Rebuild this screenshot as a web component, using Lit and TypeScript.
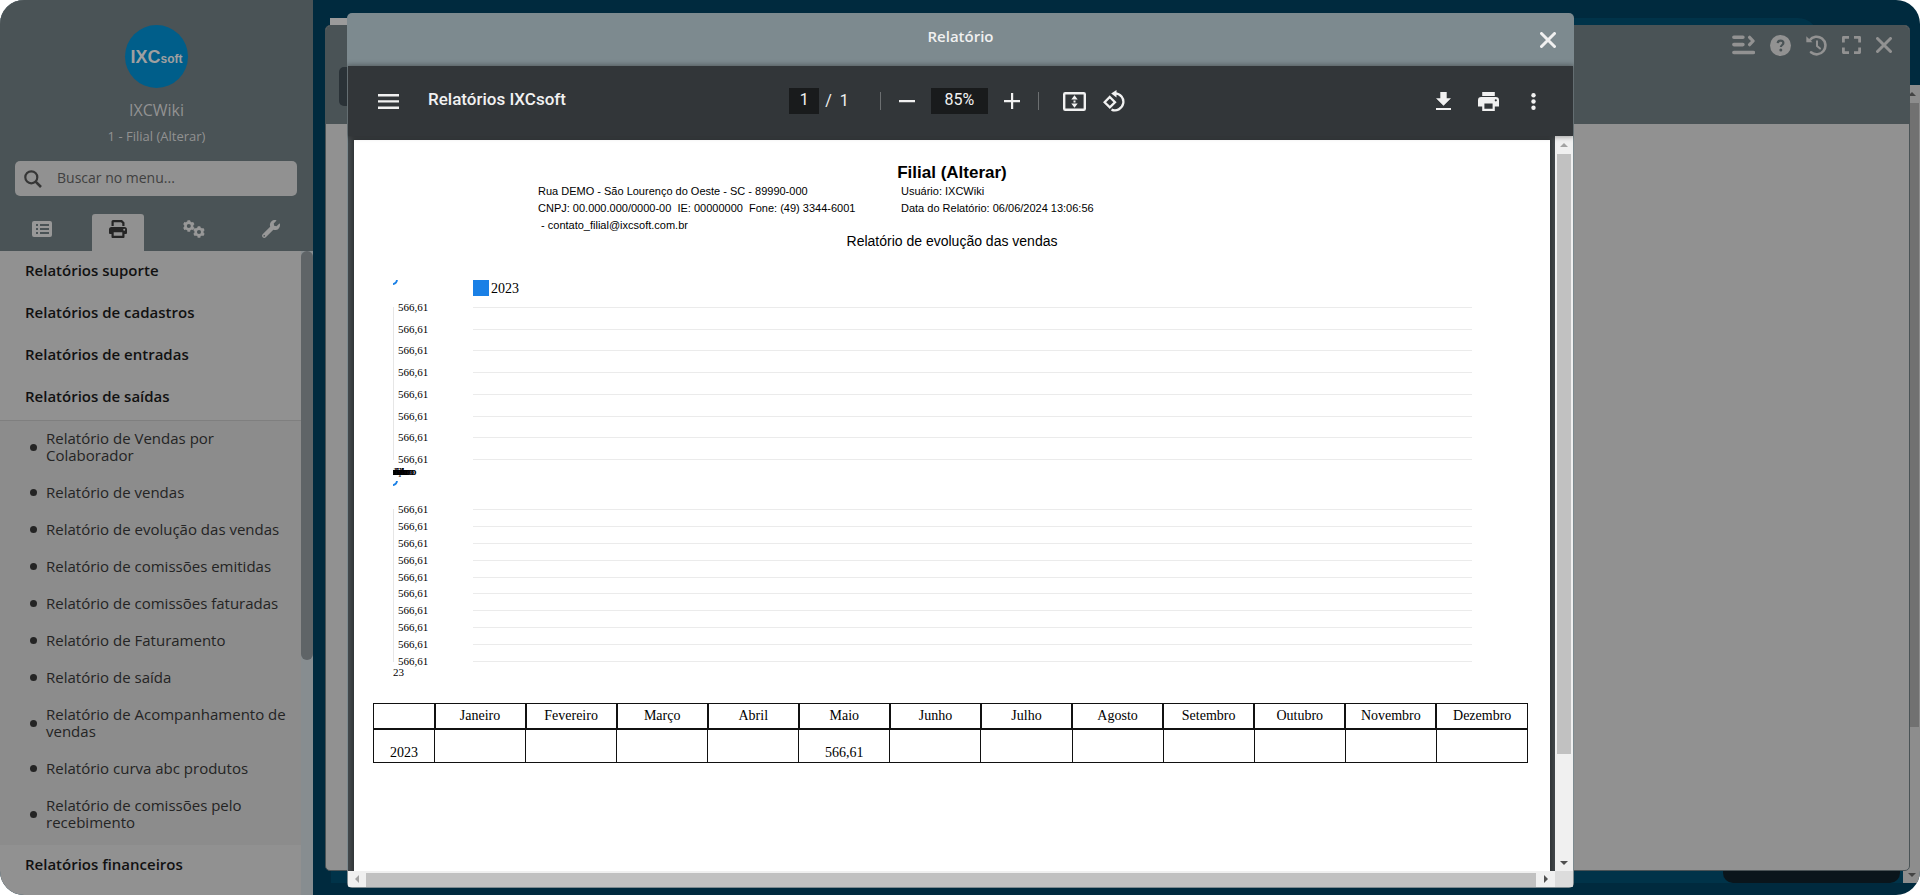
import { LitElement, html, css, svg } from "lit";
import { customElement, state } from "lit/decorators.js";

const MONTHS = ["Janeiro", "Fevereiro", "Março", "Abril", "Maio", "Junho", "Julho", "Agosto", "Setembro", "Outubro", "Novembro", "Dezembro"];
const SALES: Record<string, string> = { Maio: "566,61" };
const GROUPS = [
  { name: "Relatórios suporte", items: [] as string[] },
  { name: "Relatórios de cadastros", items: [] as string[] },
  { name: "Relatórios de entradas", items: [] as string[] },
  {
    name: "Relatórios de saídas",
    items: [
      "Relatório de Vendas por Colaborador",
      "Relatório de vendas",
      "Relatório de evolução das vendas",
      "Relatório de comissões emitidas",
      "Relatório de comissões faturadas",
      "Relatório de Faturamento",
      "Relatório de saída",
      "Relatório de Acompanhamento de vendas",
      "Relatório curva abc produtos",
      "Relatório de comissões pelo recebimento",
    ],
  },
  { name: "Relatórios financeiros", items: [] as string[] },
];

/* Six-toothed gear with a round hole, centred on cx, cy */
const gear = (cx: number, cy: number, r: number) => svg`
  <circle cx=${cx} cy=${cy} r=${r * 0.58} fill="none" stroke="currentColor" stroke-width=${r * 0.46}></circle>
  ${[0, 60, 120, 180, 240, 300].map(
    (a) => svg`<rect x=${cx - r * 0.24} y=${cy - r} width=${r * 0.48} height=${r * 0.4} rx="0.4" fill="currentColor" transform="rotate(${a} ${cx} ${cy})"></rect>`
  )}`;

const icons = {
  search: html`<svg width="18" height="18" viewBox="0 0 18 18" fill="none" stroke="currentColor"><circle cx="7.3" cy="7.3" r="6" stroke-width="2.2"></circle><path d="M11.6 11.6 17 17" stroke-width="2.6"></path></svg>`,
  list: html`<svg width="20" height="16" viewBox="0 0 20 16"><path fill="currentColor" fill-rule="evenodd" d="M2 0h16a2 2 0 0 1 2 2v12a2 2 0 0 1-2 2H2a2 2 0 0 1-2-2V2a2 2 0 0 1 2-2zM4 3v2h2V3zm4 0v2h9V3zM4 7v2h2V7zm4 0v2h9V7zm-4 4v2h2v-2zm4 0v2h9v-2z"></path></svg>`,
  printer: html`<svg width="18" height="18" viewBox="0 0 18 18"><path fill="currentColor" fill-rule="evenodd" d="M4 0h9l2.500 2.500V6h-2.200V3.400L12 2.200H4.700V6H2.500V1.500A1.500 1.500 0 0 1 4 0zM2.500 7h13A2.500 2.500 0 0 1 18 9.500V13a1 1 0 0 1-1 1h-1.500v3a1 1 0 0 1-1 1h-11a1 1 0 0 1-1-1v-3H1a1 1 0 0 1-1-1V9.500A2.500 2.500 0 0 1 2.500 7zM4.700 12.200v3.600h8.600v-3.600zM15.200 8.700a1 1 0 1 0 0 2 1 1 0 0 0 0-2z"></path></svg>`,
  gears: html`<svg width="22" height="18" viewBox="0 0 22 18">${gear(5.8, 6, 5.8)}${gear(16, 12, 5.8)}</svg>`,
  wrench: html`<svg width="18" height="18" viewBox="0 0 512 512"><path fill="currentColor" fill-rule="evenodd" d="M507.700 109.100c-2.200-9-13.500-12.100-20.100-5.500l-74.400 74.400-67.900-11.300L334 98.900l74.400-74.400c6.600-6.600 3.400-17.900-5.700-20.200-47.400-11.700-99.600.9-136.600 37.900-39.600 39.600-50.500 97.100-34.100 147.200L18.700 402.800c-25 25-25 65.500 0 90.500s65.500 25 90.500 0l213.200-213.200c50.100 16.700 107.500 5.700 147.400-34.200 37.100-37.100 49.700-89.300 37.900-136.800zM64 472a24 24 0 1 1 0-48 24 24 0 0 1 0 48z"></path></svg>`,
  close: html`<svg width="16" height="16" viewBox="0 0 16 16"><path d="M1.500 1.500l13 13M14.500 1.500l-13 13" stroke="currentColor" stroke-width="3" stroke-linecap="round"></path></svg>`,
  sideMenu: html`<svg width="23" height="20" viewBox="0 0 23 20" fill="none" stroke="currentColor" stroke-width="3.600" stroke-linecap="round" stroke-linejoin="round"><path d="M1.900 2.200h9M1.900 9.600h9M1.900 17.500h19.500"></path><path d="M17.600 2.300l3.500 3.700-3.500 3.700" stroke-width="3.200"></path></svg>`,
  help: html`<svg width="21" height="21" viewBox="0 0 21 21"><circle cx="10.500" cy="10.500" r="10.500" fill="currentColor"></circle><path class="hole" d="M7.700 8.200c.2-1.900 1.300-2.600 2.800-2.600 1.700 0 2.900 1 2.900 2.400 0 2-2.500 2-2.500 4" fill="none" stroke-width="2.200"></path><circle class="dot" cx="10.800" cy="15" r="1.500"></circle></svg>`,
  history: html`<svg width="21" height="21" viewBox="0 0 21 21" fill="none" stroke="currentColor" stroke-width="2.600" stroke-linecap="round"><path d="M3.600 5.200A8.800 8.800 0 1 1 5 17.300"></path><path d="M11 6.200v4.800l3 2.500" stroke-width="2"></path><path d="M.3 1.200v6.100h6.200z" fill="currentColor" stroke="none"></path></svg>`,
  expand: html`<svg width="19" height="18" viewBox="0 0 19 18" fill="none" stroke="currentColor" stroke-width="2.800" stroke-linejoin="round"><path d="M1.400 6.500V1.400H7M12 1.400h5.600v5.100M17.600 11.500v5.100H12M7 16.600H1.400v-5.100"></path></svg>`,
  burger: html`<svg width="21" height="15" viewBox="0 0 21 15"><path fill="currentColor" d="M0 0h21v2.400H0zM0 6.200h21v2.400H0zM0 12.600h21V15H0z"></path></svg>`,
  minus: html`<svg width="16" height="16" viewBox="0 0 16 16"><path fill="currentColor" d="M0 7h16v2.200H0z"></path></svg>`,
  plus: html`<svg width="16" height="16" viewBox="0 0 16 16"><path fill="currentColor" d="M0 7h7V0h2.200v7H16v2.200H9.200V16H7V9.200H0z"></path></svg>`,
  fit: html`<svg width="23" height="19" viewBox="0 0 23 19"><rect x="1.200" y="1.200" width="20.600" height="16.600" rx="1" fill="none" stroke="currentColor" stroke-width="2.400"></rect><path fill="currentColor" d="M11.500 3.200l3.200 4.200H8.300zM11.500 15.800l3.200-4.200H8.300zM10.500 8.600h2v1.800h-2z"></path></svg>`,
  rotate: html`<svg width="22" height="22" viewBox="0 0 22 22" fill="none" stroke="currentColor" stroke-width="2.300"><path d="M6.800 7 12 12.200 6.800 17.400 1.600 12.200z"></path><path d="M12 3.300a8.500 8.500 0 1 1-3.500 16.300"></path><path d="M13.500 0v7.400L8.200 3.500z" fill="currentColor" stroke="none"></path></svg>`,
  download: html`<svg width="15" height="18" viewBox="0 0 15 18"><path fill="currentColor" d="M4.300 0h6.400v6.300H15l-7.500 7.400L0 6.300h4.300zM0 15.900h15V18H0z"></path></svg>`,
  print: html`<svg width="21" height="19" viewBox="0 0 21 19"><path fill="currentColor" fill-rule="evenodd" d="M4.200 0h12.600v3.900H4.200zM3.200 5h14.600A3.200 3.200 0 0 1 21 8.200v6.400h-4.200V19H4.200v-4.400H0V8.200A3.200 3.200 0 0 1 3.200 5zM6.400 11.600v5.200h8.200v-5.200zM17.800 7.200a1.100 1.100 0 1 0 0 2.200 1.100 1.100 0 0 0 0-2.200z"></path></svg>`,
  more: html`<svg width="5" height="17" viewBox="0 0 5 17" fill="currentColor"><circle cx="2.500" cy="2.200" r="2.200"></circle><circle cx="2.500" cy="8.500" r="2.200"></circle><circle cx="2.500" cy="14.800" r="2.200"></circle></svg>`,
};

const arrow = (d: string) => html`<svg class="arrow" width="8" height="8" viewBox="0 0 8 8"><path fill="currentColor" d=${d}></path></svg>`;
const UP = "M0 6h8L4 2z";
const DOWN = "M0 2h8L4 6z";
const LEFT = "M6 0v8L2 4z";
const RIGHT = "M2 0v8l4-4z";

@customElement("side-menu")
class SideMenu extends LitElement {
  @state() private tab = 1;

  static styles = css`
    * { box-sizing: border-box; }
    :host { display: flex; flex-direction: column; background: #919191; font-family: "Open Sans", sans-serif; overflow: hidden; }
    button { border: 0; background: none; font: inherit; color: inherit; padding: 0; cursor: pointer; }
    svg { display: block; }
    .head { background: #4a5356; color: #929292; display: flex; flex-direction: column; align-items: center; padding-top: 25px; flex: none; }
    .logo { width: 63px; height: 63px; border-radius: 50%; background: #005e8a; color: #a0a0a0; display: flex; align-items: baseline; justify-content: center; font-family: "Liberation Sans", Arial, sans-serif; font-weight: 700; }
    .brand { font-size: 18px; line-height: 64px; }
    .brand-soft { font-size: 12px; }
    .user { font-size: 16px; line-height: 22px; margin-top: 11px; }
    .branch { font-size: 13px; line-height: 18px; margin-top: 6px; }
    .search { align-self: stretch; margin: 16px 16px 18px 15px; height: 35px; border-radius: 5px; background: #919191; color: #363636; display: flex; align-items: center; gap: 13px; padding-left: 9px; }
    .search input { flex: 1; min-width: 0; border: 0; outline: 0; background: none; font: 14px "Open Sans", sans-serif; color: #363636; padding: 0 2px 2px; }
    .search input::placeholder { color: #404040; opacity: 1; }
    .tabs { align-self: stretch; display: grid; grid-template-columns: 92px 52px 100px 1fr; height: 37px; color: #989898; }
    .tab { display: flex; align-items: center; justify-content: center; padding: 0 0 7px; }
    .tab:first-child { padding-right: 8px; }
    .tab:last-child { padding-right: 15px; }
    .tab.on { background: #919191; color: #252525; border-radius: 3px 3px 0 0; }
    .body { flex: 1; min-height: 0; display: flex; }
    .list { flex: 1; min-width: 0; overflow: hidden; }
    .group { display: block; width: 100%; height: 42px; padding: 0 0 4px 25px; text-align: left; font-size: 15px; font-weight: 600; color: #111; }
    .sub { margin: 1px 0 0; padding: 0 0 3px; list-style: none; background: #8c8c8c; border-top: 1px solid #7f7f7f; }
    .item { display: flex; align-items: center; gap: 9px; padding: 9px 6px 11px 30px; font-size: 15px; line-height: 17px; color: #242424; text-decoration: none; }
    .dot { width: 7px; height: 7px; border-radius: 50%; background: #242424; flex: none; }
    .bar { width: 12px; background: #878d90; flex: none; }
    .thumb { height: 409px; border-radius: 6px; background: #5f6467; }
  `;

  render() {
    const tabs = [["Menu", icons.list], ["Relatórios", icons.printer], ["Configurações", icons.gears], ["Ferramentas", icons.wrench]] as const;
    return html`
      <div class="head">
        <div class="logo"><span class="brand">IXC</span><span class="brand-soft">soft</span></div>
        <div class="user">IXCWiki</div>
        <div class="branch">1 - Filial (Alterar)</div>
        <label class="search">${icons.search}<input type="text" aria-label="Buscar no menu" placeholder="Buscar no menu..." /></label>
        <div class="tabs">
          ${tabs.map(([name, icon], i) => html`<button class="tab ${i === this.tab ? "on" : ""}" aria-label=${name} @click=${() => (this.tab = i)}>${icon}</button>`)}
        </div>
      </div>
      <div class="body">
        <nav class="list">
          ${GROUPS.map(
            (g) => html`<button class="group">${g.name}</button>
              ${g.items.length ? html`<ul class="sub">${g.items.map((t) => html`<li><a class="item" href="#"><span class="dot"></span><span>${t}</span></a></li>`)}</ul>` : ""}`
          )}
        </nav>
        <div class="bar"><div class="thumb"></div></div>
      </div>
    `;
  }
}

@customElement("sales-report")
class SalesReport extends LitElement {
  static styles = css`
    * { box-sizing: border-box; }
    :host { display: block; background: #fff; color: #000; font-family: "Liberation Serif", "Times New Roman", serif; padding: 22px 22px 0 19px; overflow: hidden; box-shadow: 0 0 4px 2px rgba(0, 0, 0, 0.3); }
    svg { display: block; }
    .top { font-family: "Liberation Sans", Arial, sans-serif; padding-left: 3px; }
    .company { margin: 0; font-size: 17px; line-height: 21px; text-align: center; }
    .meta { display: grid; grid-template-columns: 363px 1fr; padding-left: 162px; font-size: 11px; line-height: 17px; white-space: pre; }
    .title { margin: 0; font-size: 14px; line-height: 14px; font-weight: 400; text-align: center; }
    .chart { margin-left: 20px; width: 1079px; }
    .legend { display: flex; height: 16px; font-size: 14px; line-height: 18px; }
    .curl { width: 80px; }
    .swatch { width: 16px; height: 16px; background: #1a80e6; margin-right: 2px; }
    .plot { display: flex; flex-direction: column; justify-content: space-between; border-left: 1px solid #e6e6e6; height: 153px; }
    .row { display: grid; grid-template-columns: 75px 1fr; grid-template-rows: 1px; align-items: center; font-size: 11px; line-height: 13px; padding-left: 4px; }
    .line { height: 1px; background: #ebebeb; }
    .ticks { width: 24px; height: 12px; overflow: hidden; font-size: 11px; line-height: 12px; }
    .stack { display: grid; width: 48px; margin-left: -24px; }
    .stack span { grid-area: 1 / 1; text-align: center; }
    .first { margin-top: 32px; }
    .first .plot { margin: 11px 0 5px; }
    .second .plot { margin: 12px 0 4px; }
    .second .legend { margin-top: 4px; }
    table { width: 100%; margin-top: 25px; border-collapse: collapse; table-layout: fixed; font-size: 14px; text-align: center; }
    th, td { font-weight: 400; border: 1px solid #111; padding: 0; }
    th { height: 25px; border-bottom-width: 2px; border-left-width: 2px; }
    th:first-child { width: 61px; border-left-width: 1px; }
    td { height: 34px; vertical-align: bottom; line-height: 18px; }
  `;

  private chart(rows: number, ticks: string[], legend: boolean) {
    return html`<div class="chart ${legend ? "first" : "second"}">
      <div class="legend">
        <div class="curl"><svg width="5" height="5" viewBox="0 0 5 5"><path d="M0 4.200Q3.600 3.600 4 0" fill="none" stroke="#1a80e6" stroke-width="1.800"></path></svg></div>
        ${legend ? html`<div class="swatch"></div><span>2023</span>` : ""}
      </div>
      <div class="plot">${Array.from({ length: rows }, () => html`<div class="row"><span>566,61</span><div class="line"></div></div>`)}</div>
      <div class="ticks"><div class="stack">${ticks.map((t) => html`<span>${t}</span>`)}</div></div>
    </div>`;
  }

  render() {
    return html`
      <div class="top">
        <h1 class="company">Filial (Alterar)</h1>
        <div class="meta">
          <span>Rua DEMO - São Lourenço do Oeste - SC - 89990-000</span><span>Usuário: IXCWiki</span>
          <span>CNPJ: 00.000.000/0000-00  IE: 00000000  Fone: (49) 3344-6001</span><span>Data do Relatório: 06/06/2024 13:06:56</span>
          <span> - contato_filial@ixcsoft.com.br</span>
        </div>
        <h2 class="title">Relatório de evolução das vendas</h2>
      </div>
      ${this.chart(8, MONTHS, true)}
      ${this.chart(10, ["2023"], false)}
      <table>
        <thead><tr><th></th>${MONTHS.map((m) => html`<th>${m}</th>`)}</tr></thead>
        <tbody><tr><td>2023</td>${MONTHS.map((m) => html`<td>${SALES[m] ?? ""}</td>`)}</tr></tbody>
      </table>
    `;
  }
}

@customElement("report-dialog")
class ReportDialog extends LitElement {
  static styles = css`
    * { box-sizing: border-box; }
    :host { display: flex; flex-direction: column; background: #7d8a8f; border-radius: 5px; padding: 0 1px 1px; overflow: hidden; font-family: "Open Sans", sans-serif; }
    button { border: 0; background: none; font: inherit; color: inherit; padding: 0; cursor: pointer; }
    svg { display: block; }
    .bar { display: grid; grid-template-columns: 1fr auto 1fr; align-items: center; height: 53px; flex: none; color: #f0f0f0; }
    .name { margin: 0; grid-column: 2; font-size: 15px; line-height: 20px; font-weight: 600; padding-bottom: 7px; }
    .close { justify-self: end; margin-right: 17px; }
    .tools { display: grid; grid-template-columns: 1fr auto 1fr; align-items: center; height: 70px; flex: none; background: #323639; color: #f1f1f1; padding: 0 37px 0 30px; font-family: Roboto, sans-serif; box-shadow: 0 0 5px 1px rgba(0, 0, 0, 0.35); position: relative; }
    .left, .mid, .right { display: flex; align-items: center; }
    .left { gap: 29px; }
    .title { font-size: 17px; line-height: 20px; font-weight: 500; padding-bottom: 4px; }
    .right { justify-content: flex-end; gap: 27px; }
    .right button:last-child { margin-left: 5px; }
    .field { border: 0; padding: 0 0 3px; height: 26px; background: #191b1c; color: #f1f1f1; text-align: center; font: 16px Roboto, sans-serif; }
    .page { width: 30px; }
    .zoom { width: 57px; margin: 0 16px; }
    .count { font-size: 16px; line-height: 24px; white-space: pre; margin: 0 31px 0 6px; }
    .sep { width: 1px; height: 18px; background: #6c6f71; }
    .sep + button { margin-left: 18px; }
    .plus { margin-right: 18px; }
    .sep + .fit { margin: 0 17px 0 24px; }
    .view { flex: 1; min-height: 0; display: grid; grid-template-columns: 1fr 18px; grid-template-rows: 1fr 16px; background: #f0f0f0; }
    .canvas { background: #43484b; padding: 4px 5px 0 6px; display: grid; min-height: 0; overflow: hidden; }
    .vert { display: grid; grid-template-rows: 18px 600fr 101fr 16px; justify-items: center; align-items: center; color: #505050; }
    .vert .thumb { width: 14px; height: 100%; background: #c1c1c1; }
    .vert .arrow:last-child { grid-row: 4; }
    .vert .arrow:first-child, .horz .arrow:first-child { color: #a3a3a3; }
    .horz { display: grid; grid-template-columns: 18px 1fr 19px; align-items: center; justify-items: center; color: #505050; }
    .horz .thumb { width: 100%; height: 14px; background: #c1c1c1; align-self: end; }
    .corner { background: #dcdcdc; }
  `;

  render() {
    return html`
      <div class="bar"><h2 class="name">Relatório</h2><button class="close" aria-label="Fechar">${icons.close}</button></div>
      <div class="tools">
        <div class="left"><button aria-label="Menu">${icons.burger}</button><span class="title">Relatórios IXCsoft</span></div>
        <div class="mid">
          <input class="field page" aria-label="Página" value="1" /><span class="count">/  1</span>
          <span class="sep"></span>
          <button aria-label="Reduzir">${icons.minus}</button>
          <input class="field zoom" aria-label="Zoom" value="85%" />
          <button class="plus" aria-label="Ampliar">${icons.plus}</button>
          <span class="sep"></span>
          <button class="fit" aria-label="Ajustar">${icons.fit}</button>
          <button aria-label="Girar">${icons.rotate}</button>
        </div>
        <div class="right">
          <button aria-label="Baixar">${icons.download}</button>
          <button aria-label="Imprimir">${icons.print}</button>
          <button aria-label="Mais">${icons.more}</button>
        </div>
      </div>
      <div class="view">
        <div class="canvas"><sales-report></sales-report></div>
        <div class="vert">${arrow(UP)}<div class="thumb"></div>${arrow(DOWN)}</div>
        <div class="horz">${arrow(LEFT)}<div class="thumb"></div>${arrow(RIGHT)}</div>
        <div class="corner"></div>
      </div>
    `;
  }
}

@customElement("app-root")
class AppRoot extends LitElement {
  static styles = css`
    * { box-sizing: border-box; }
    :host { display: grid; grid-template-columns: 313px 1fr; height: 100vh; border-radius: 24px; overflow: hidden; background: #002a3e; position: relative; }
    button { border: 0; background: none; font: inherit; color: inherit; padding: 0; cursor: pointer; }
    svg { display: block; }
    .desk { position: relative; min-width: 0; }
    .tabstrip { position: absolute; left: 17px; top: 18px; right: 102px; height: 40px; border-radius: 0 20px 0 0; background: #003349; }
    .opentab { width: 200px; height: 100%; background: #9b9b9b; }
    .taskbar { position: absolute; left: 18px; right: 17px; bottom: 12px; height: 40px; background: #003349; }
    .clock { position: absolute; right: 3px; bottom: 0; width: 177px; height: 40px; border-radius: 10px; background: #0a151b; }
    .scroll { position: absolute; right: 0; top: 85px; bottom: 12px; width: 17px; background: #8d8d8d; color: #444; display: grid; grid-template-rows: 18px 624fr 140fr 16px; justify-items: center; align-items: center; }
    .scroll .thumb { width: 15px; height: 100%; background: #717171; }
    .scroll .arrow:last-child { grid-row: 4; }
    .window { position: absolute; left: 12px; right: 10px; top: 25px; bottom: 24px; background: #919191; border: 1px solid #4a5356; border-radius: 5px; overflow: hidden; }
    .winbar { height: 98px; background: #4a5356; color: #929292; display: flex; justify-content: space-between; padding: 0 17px 0 13px; }
    .action { width: 120px; height: 39px; margin-top: 41px; border-radius: 5px; background: #2a3237; }
    .tools { display: flex; align-items: center; height: 38px; gap: 15px; }
    .tools .hole { stroke: #4a5356; }
    .tools .dot { fill: #4a5356; }
    report-dialog { position: absolute; top: 13px; bottom: 7px; left: 347px; right: 346px; }
  `;

  render() {
    return html`
      <side-menu></side-menu>
      <main class="desk">
        <div class="tabstrip"><div class="opentab"></div></div>
        <div class="taskbar"><div class="clock"></div></div>
        <div class="scroll">${arrow(UP)}<div class="thumb"></div>${arrow(DOWN)}</div>
        <section class="window">
          <div class="winbar">
            <button class="action" aria-label="Novo"></button>
            <div class="tools">
              <button aria-label="Menu lateral">${icons.sideMenu}</button>
              <button aria-label="Ajuda">${icons.help}</button>
              <button aria-label="Histórico">${icons.history}</button>
              <button aria-label="Tela cheia">${icons.expand}</button>
              <button aria-label="Fechar">${icons.close}</button>
            </div>
          </div>
        </section>
      </main>
      <report-dialog role="dialog" aria-label="Relatório"></report-dialog>
    `;
  }
}
